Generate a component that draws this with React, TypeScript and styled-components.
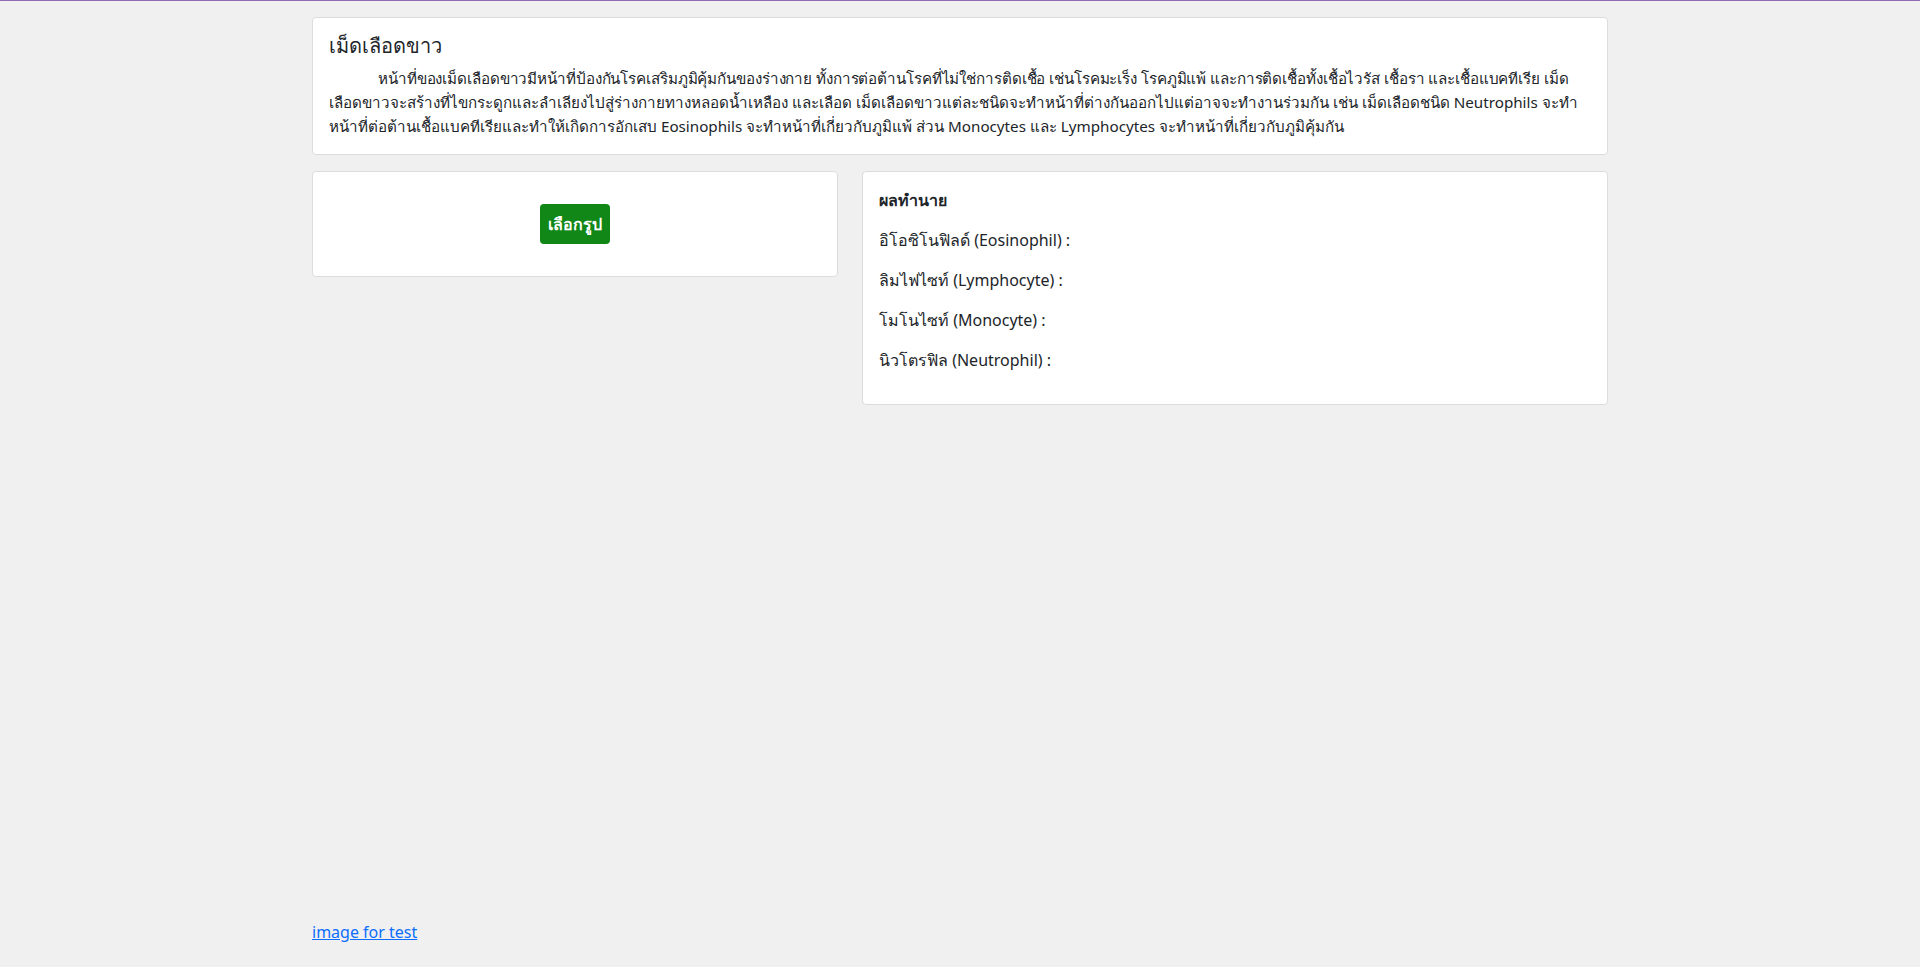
import React from "react";
import styled, { createGlobalStyle } from "styled-components";

const GlobalStyle = createGlobalStyle`
  * { box-sizing: border-box; }
  html, body { margin: 0; padding: 0; }
  body {
    background: #f0f0f0;
    color: #212529;
    font-family: "Noto Sans", "Open Sans", "DejaVu Sans", sans-serif;
    font-size: 16px;
    line-height: 24px;
    border-top: 1px solid #8f6cb8;
  }
`;

const Page = styled.div`
  min-height: calc(100vh - 1px);
  display: flex;
  flex-direction: column;
`;

const Container = styled.div`
  width: 1320px;
  margin: 0 auto;
  padding: 16px 12px 0;
  display: flex;
  flex-direction: column;
  gap: 16px;
`;

const Card = styled.div`
  background: #ffffff;
  border: 1px solid #dcdcdc;
  border-radius: 4px;
`;

const CardBody = styled.div<{ $center?: boolean; $pad?: string }>`
  padding: ${(p) => p.$pad ?? "16px"};
  display: flex;
  flex-direction: column;
  align-items: ${(p) => (p.$center ? "center" : "stretch")};
`;

const Title = styled.h5`
  margin: 0 0 8px;
  font-size: 20px;
  font-weight: 500;
  line-height: 24px;
`;

const Intro = styled.p`
  margin: 0;
  font-size: 15.2px;
  line-height: 24px;
`;

const IntroLine = styled.span<{ $indent?: boolean }>`
  display: block;
  white-space: nowrap;
  padding-left: ${(p) => (p.$indent ? "49px" : "0")};
  letter-spacing: ${(p) => (p.$indent ? "-0.1px" : "0")};
`;

const Row = styled.div`
  display: grid;
  grid-template-columns: 526px 746px;
  gap: 24px;
  align-items: start;
`;

const PickButton = styled.button`
  height: 40px;
  padding: 0 8px;
  border: none;
  border-radius: 4px;
  background: #118717;
  color: #ffffff;
  font-family: inherit;
  font-size: 16px;
  font-weight: 700;
  cursor: pointer;
`;

const ResultLine = styled.p<{ $bold?: boolean }>`
  margin: 0 0 16px;
  font-weight: ${(p) => (p.$bold ? 700 : 400)};
`;

const Footer = styled.div`
  margin-top: auto;
  width: 1320px;
  margin-left: auto;
  margin-right: auto;
  padding: 0 12px 23px;
`;

const TestLink = styled.a`
  color: #0d6efd;
  text-decoration: underline;
  font-size: 16px;
`;

const results = [
  "อิโอซิโนฟิลด์ (Eosinophil) :",
  "ลิมไฟไซท์ (Lymphocyte) :",
  "โมโนไซท์ (Monocyte) :",
  "นิวโตรฟิล (Neutrophil) :",
];

const introLines = [
  "หน้าที่ของเม็ดเลือดขาวมีหน้าที่ป้องกันโรคเสริมภูมิคุ้มกันของร่างกาย ทั้งการต่อต้านโรคที่ไม่ใช่การติดเชื้อ เช่นโรคมะเร็ง โรคภูมิแพ้ และการติดเชื้อทั้งเชื้อไวรัส เชื้อรา และเชื้อแบคทีเรีย เม็ด",
  "เลือดขาวจะสร้างที่ไขกระดูกและลำเลียงไปสู่ร่างกายทางหลอดน้ำเหลือง และเลือด เม็ดเลือดขาวแต่ละชนิดจะทำหน้าที่ต่างกันออกไปแต่อาจจะทำงานร่วมกัน เช่น เม็ดเลือดชนิด Neutrophils จะทำ",
  "หน้าที่ต่อต้านเชื้อแบคทีเรียและทำให้เกิดการอักเสบ Eosinophils จะทำหน้าที่เกี่ยวกับภูมิแพ้ ส่วน Monocytes และ Lymphocytes จะทำหน้าที่เกี่ยวกับภูมิคุ้มกัน",
];

export default function App() {
  return (
    <>
      <GlobalStyle />
      <Page>
        <Container>
          <Card>
            <CardBody>
              <Title>เม็ดเลือดขาว</Title>
              <Intro>
                {introLines.map((l, i) => (
                  <IntroLine key={i} $indent={i === 0}>
                    {l}
                  </IntroLine>
                ))}
              </Intro>
            </CardBody>
          </Card>
          <Row>
            <Card>
              <CardBody $center $pad="32px 16px">
                <PickButton type="button">เลือกรูป</PickButton>
              </CardBody>
            </Card>
            <Card>
              <CardBody>
                <ResultLine $bold>ผลทำนาย</ResultLine>
                {results.map((r) => (
                  <ResultLine key={r}>{r}</ResultLine>
                ))}
              </CardBody>
            </Card>
          </Row>
        </Container>
        <Footer>
          <TestLink href="#">image for test</TestLink>
        </Footer>
      </Page>
    </>
  );
}
